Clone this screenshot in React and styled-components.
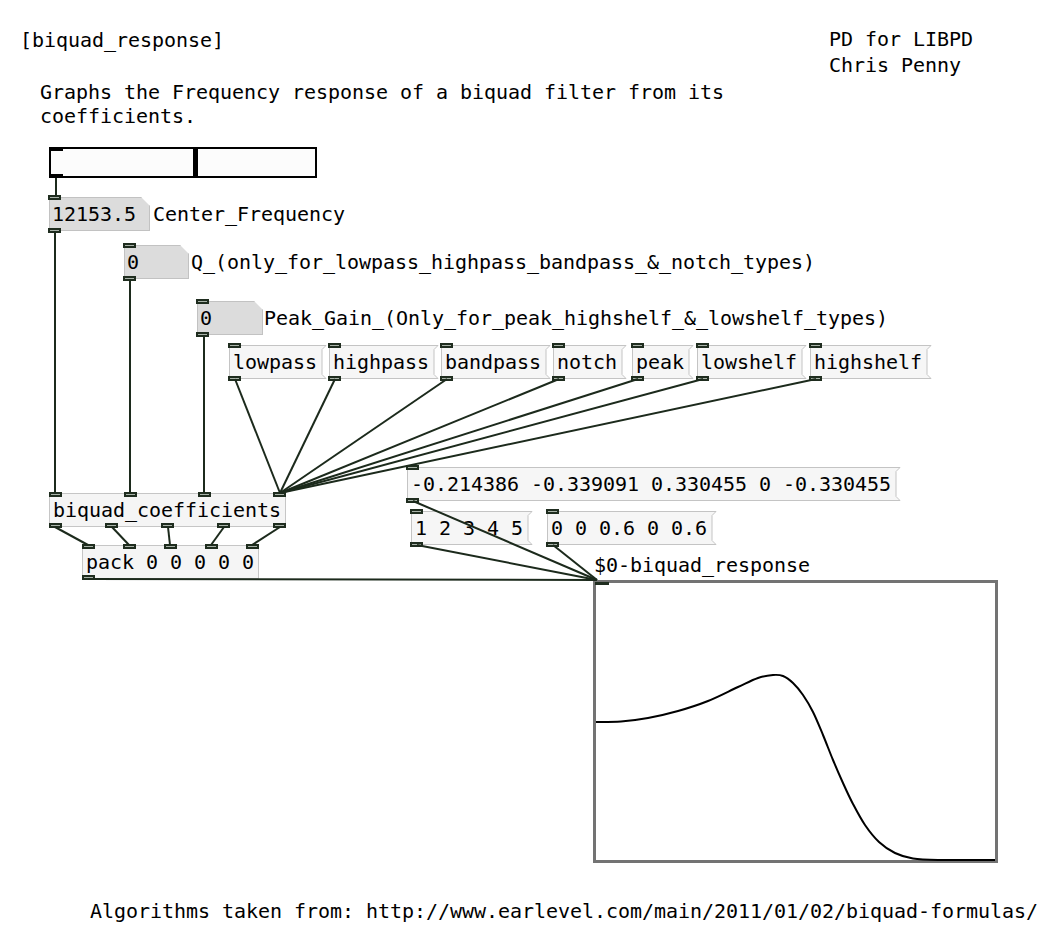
import styled, { createGlobalStyle } from "styled-components";

const GlobalStyle = createGlobalStyle`
  html, body {
    margin: 0;
    padding: 0;
    background: #fff;
  }
`;

const Canvas = styled.div`
  position: relative;
  width: 1053px;
  height: 939px;
  overflow: hidden;
  background: #fff;
  color: #000;
  font-family: "DejaVu Sans Mono", "Liberation Mono", monospace;
  font-size: 20px;
  letter-spacing: -0.04px;
`;

// free text on the patch
const Comment = styled.div`
  position: absolute;
  left: ${p => p.$x}px;
  top: ${p => p.$y}px;
  line-height: ${p => p.$lh || 24}px;
  white-space: pre;
`;

// inlets / outlets
const Nubs = styled.div`
  position: absolute;
  left: -1px;
  right: -1px;
  ${p => (p.$bottom ? "bottom: -2px;" : "top: -2px;")}
  display: flex;
  justify-content: space-between;
  z-index: 1;
`;

const Nub = styled.span`
  display: block;
  width: 13px;
  height: ${p => (p.$solid ? 4 : 5)}px;
  box-sizing: border-box;
  border: 2px solid ${p => (p.$solid ? "#000" : "#1f2d1f")};
  background: ${p => (p.$solid ? "#000" : "#a9b3a9")};
`;

const Obj = styled.div`
  position: absolute;
  left: ${p => p.$x}px;
  top: ${p => p.$y}px;
  height: 34px;
  box-sizing: border-box;
  padding: 0 4px 0 3px;
  line-height: 32px;
  border: 1px solid #c6c6c6;
  background: #f5f5f5;
  white-space: pre;
`;

const Msg = styled.div`
  position: absolute;
  left: ${p => p.$x}px;
  top: ${p => p.$y}px;
  display: flex;
  height: 34px;
`;

const MsgBody = styled.div`
  box-sizing: border-box;
  height: 34px;
  padding: 0 2px 0 3px;
  line-height: 32px;
  border: 1px solid #c4c4c4;
  border-right: none;
  background: #f6f6f6;
  white-space: pre;
`;

const Flag = styled.svg`
  display: block;
  flex: none;
  width: 8px;
  height: 34px;
`;

const Atom = styled.div`
  position: absolute;
  left: ${p => p.$x}px;
  top: ${p => p.$y}px;
  width: ${p => p.$w}px;
  height: 34px;
`;

const AtomBody = styled.div`
  height: 100%;
  box-sizing: border-box;
  padding-left: 2px;
  line-height: 32px;
  border: 1px solid #c2c2c2;
  background: #dcdcdc;
  clip-path: polygon(0 0, calc(100% - 9px) 0, 100% 9px, 100% 100%, 0 100%);
`;

const Slider = styled.div`
  position: absolute;
  left: 49px;
  top: 147px;
  width: 268px;
  height: 31px;
  box-sizing: border-box;
  border: 2px solid #000;
  background: #fcfcfc;
`;

const Knob = styled.div`
  position: absolute;
  top: 0;
  bottom: 0;
  left: ${p => p.$pos}px;
  width: 5px;
  background: #000;
`;

const Graph = styled.div`
  position: absolute;
  left: 593px;
  top: 580px;
  width: 405px;
  height: 283px;
  box-sizing: border-box;
  border: 3px solid #737373;
  background: #fff;
`;

const GraphPlot = styled.svg`
  position: absolute;
  left: -3px;
  top: -3px;
  width: 405px;
  height: 283px;
  overflow: visible;
`;

const GraphInlet = styled.span`
  position: absolute;
  left: -1px;
  top: -1px;
  width: 14px;
  height: 3px;
  background: #1f2d1f;
`;

const Wires = styled.svg`
  position: absolute;
  left: 0;
  top: 0;
  width: 1053px;
  height: 939px;
  pointer-events: none;
  z-index: 2;
`;

const Message = ({ x, y, children }) => (
  <Msg $x={x} $y={y}>
    <Nubs><Nub /></Nubs>
    <Nubs $bottom><Nub /></Nubs>
    <MsgBody>{children}</MsgBody>
    <Flag viewBox="0 0 8 34">
      <path d="M0 0.5 H7 L3 4.5 V29.5 L7 33.5 H0" fill="#f6f6f6" stroke="#c4c4c4" strokeWidth="1" />
    </Flag>
  </Msg>
);

const NumberBox = ({ x, y, w, children }) => (
  <Atom $x={x} $y={y} $w={w}>
    <Nubs><Nub /></Nubs>
    <Nubs $bottom><Nub /></Nubs>
    <AtomBody>{children}</AtomBody>
  </Atom>
);

const nubs = n => Array.from({ length: n }, (_, i) => <Nub key={i} />);

const types = [
  ["lowpass", 229],
  ["highpass", 329],
  ["bandpass", 441],
  ["notch", 553],
  ["peak", 632],
  ["lowshelf", 697],
  ["highshelf", 810],
];

const wires = [
  [56, 178, 56, 197],
  [55, 231, 55, 493],
  [130, 279, 130, 493],
  [204, 335, 204, 493],
  ...types.map(([, x]) => [x + 6, 379, 280, 493]),
  [55, 527, 88, 545],
  [112, 527, 129, 545],
  [168, 527, 170, 545],
  [224, 527, 211, 545],
  [280, 527, 252, 545],
  [88, 579, 597, 580],
  [413, 501, 597, 580],
  [417, 545, 597, 580],
  [553, 545, 597, 580],
];

// frequency response, in graph coordinates
const response = [
  [3, 142], [28, 141.5], [55, 138], [85, 131], [115, 121], [145, 107],
  [165, 98], [180, 95], [190, 96], [200, 103], [210, 115], [220, 132],
  [230, 155], [240, 180], [250, 203], [260, 224], [272, 245], [286, 262],
  [302, 273], [320, 278.5], [345, 280], [402, 280],
];

const curvePath = pts => {
  let d = `M${pts[0][0]} ${pts[0][1]}`;
  for (let i = 0; i < pts.length - 1; i++) {
    const p0 = pts[i - 1] || pts[i];
    const p1 = pts[i];
    const p2 = pts[i + 1];
    const p3 = pts[i + 2] || p2;
    const c1 = [p1[0] + (p2[0] - p0[0]) / 6, p1[1] + (p2[1] - p0[1]) / 6];
    const c2 = [p2[0] - (p3[0] - p1[0]) / 6, p2[1] - (p3[1] - p1[1]) / 6];
    d += ` C${c1[0]},${c1[1]} ${c2[0]},${c2[1]} ${p2[0]},${p2[1]}`;
  }
  return d;
};

export default function App() {
  return (
    <>
      <GlobalStyle />
      <Canvas>
        <Comment $x={20} $y={28}>[biquad_response]</Comment>
        <Comment $x={829} $y={26} $lh={26}>{"PD for LIBPD\nChris Penny"}</Comment>
        <Comment $x={40} $y={80}>
          {"Graphs the Frequency response of a biquad filter from its\ncoefficients."}
        </Comment>

        <Slider>
          <Nubs><Nub $solid /></Nubs>
          <Nubs $bottom><Nub $solid /></Nubs>
          <Knob $pos={142} />
        </Slider>

        <NumberBox x={49} y={197} w={101}>12153.5</NumberBox>
        <Comment $x={153} $y={202}>Center_Frequency</Comment>

        <NumberBox x={124} y={245} w={65}>0</NumberBox>
        <Comment $x={191} $y={250}>Q_(only_for_lowpass_highpass_bandpass_&_notch_types)</Comment>

        <NumberBox x={197} y={301} w={66}>0</NumberBox>
        <Comment $x={264} $y={306}>Peak_Gain_(Only_for_peak_highshelf_&_lowshelf_types)</Comment>

        {types.map(([label, x]) => (
          <Message key={label} x={x} y={345}>{label}</Message>
        ))}

        <Message x={407} y={467}>-0.214386 -0.339091 0.330455 0 -0.330455</Message>
        <Message x={411} y={511}>1 2 3 4 5</Message>
        <Message x={547} y={511}>0 0 0.6 0 0.6</Message>

        <Obj $x={49} $y={493}>
          <Nubs>{nubs(4)}</Nubs>
          <Nubs $bottom>{nubs(5)}</Nubs>
          biquad_coefficients
        </Obj>

        <Obj $x={82} $y={545}>
          <Nubs>{nubs(5)}</Nubs>
          <Nubs $bottom><Nub /></Nubs>
          pack 0 0 0 0 0
        </Obj>

        <Comment $x={594} $y={553}>$0-biquad_response</Comment>
        <Graph>
          <GraphPlot viewBox="0 0 405 283">
            <path d={curvePath(response)} fill="none" stroke="#000" strokeWidth="2" />
          </GraphPlot>
          <GraphInlet />
        </Graph>

        <Wires viewBox="0 0 1053 939">
          {wires.map(([x1, y1, x2, y2], i) => (
            <line key={i} x1={x1} y1={y1} x2={x2} y2={y2} stroke="#1c2a1c" strokeWidth="2" />
          ))}
        </Wires>

        <Comment $x={90} $y={899}>
          Algorithms taken from: http://www.earlevel.com/main/2011/01/02/biquad-formulas/
        </Comment>
      </Canvas>
    </>
  );
}
